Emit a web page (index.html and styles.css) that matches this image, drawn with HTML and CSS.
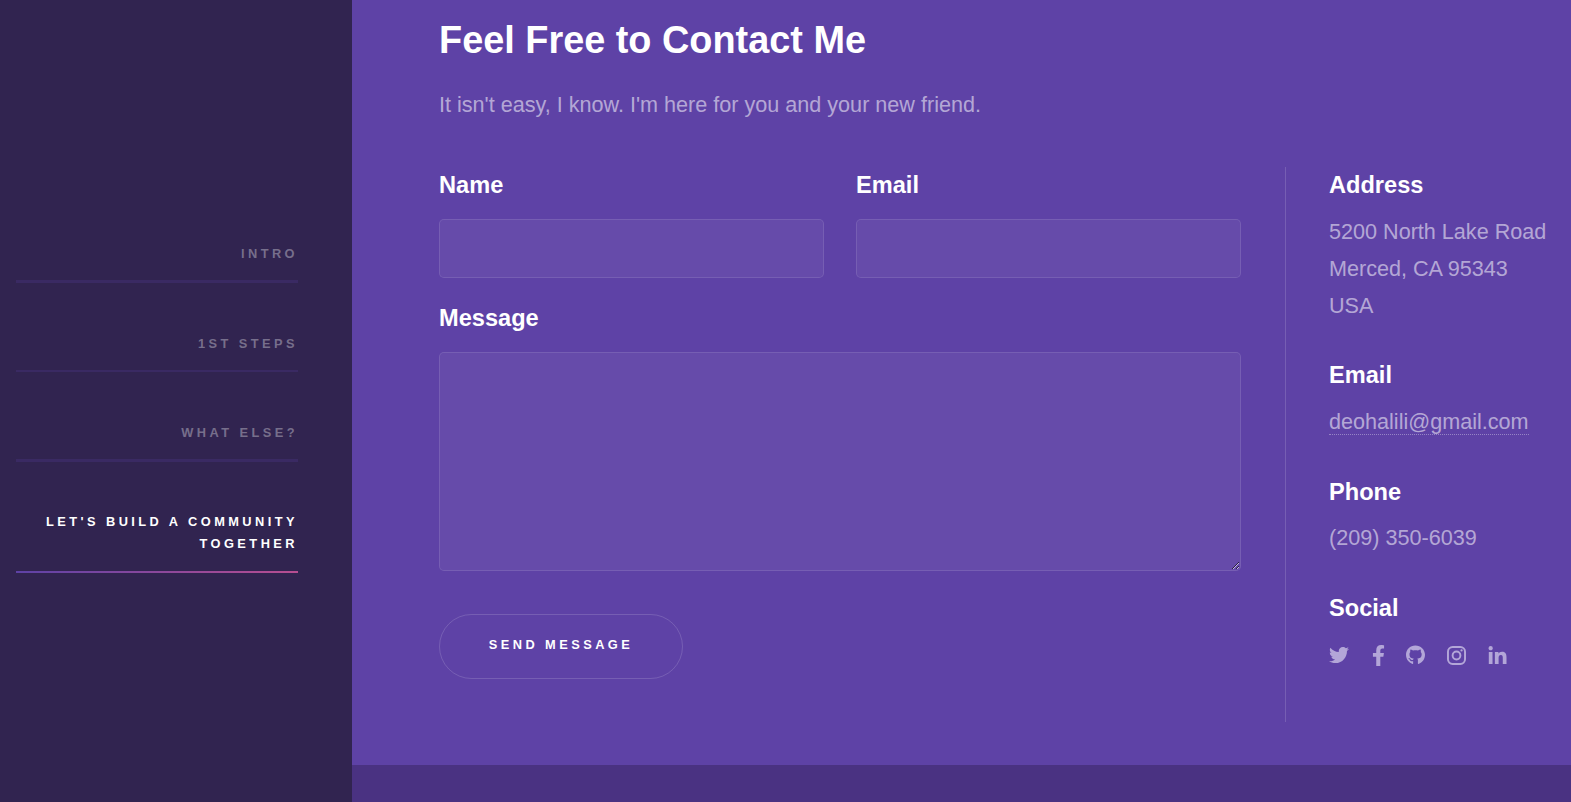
FILE: index.html
```html
<!DOCTYPE html>
<html lang="en">
<head>
<meta charset="utf-8">
<title>Contact</title>
<link rel="stylesheet" href="styles.css">
</head>
<body>
<div class="layout">
  <nav class="sidebar">
    <a class="nav-item thick" href="#intro">Intro</a>
    <a class="nav-item" href="#steps">1st Steps</a>
    <a class="nav-item thick" href="#else">What Else?</a>
    <a class="nav-item active" href="#contact">Let's Build a Community Together</a>
  </nav>
  <div class="main">
    <section class="contact">
      <h2 class="title">Feel Free to Contact Me</h2>
      <p class="lead">It isn't easy, I know. I'm here for you and your new friend.</p>
      <div class="split">
        <form class="form">
          <div class="field">
            <label class="label" for="name">Name</label>
            <input class="control" id="name" type="text">
          </div>
          <div class="field">
            <label class="label" for="email">Email</label>
            <input class="control" id="email" type="text">
          </div>
          <div class="field wide">
            <label class="label" for="message">Message</label>
            <textarea class="control area" id="message"></textarea>
          </div>
          <div class="wide actions">
            <button class="send" type="button">Send Message</button>
          </div>
        </form>
        <aside class="info">
          <h3 class="label">Address</h3>
          <p class="info-text">5200 North Lake Road<br>Merced, CA 95343<br>USA</p>
          <h3 class="label">Email</h3>
          <p class="info-text"><a class="mail" href="#mail">deohalili@gmail.com</a></p>
          <h3 class="label">Phone</h3>
          <p class="info-text">(209) 350-6039</p>
          <h3 class="label">Social</h3>
          <div class="social">
            <svg class="icon i-tw" viewBox="0 0 512 512" aria-label="Twitter"><path d="M459.37 151.716c.325 4.548.325 9.097.325 13.645 0 138.72-105.583 298.558-298.558 298.558-59.452 0-114.68-17.219-161.137-47.106 8.447.974 16.568 1.299 25.34 1.299 49.055 0 94.213-16.568 130.274-44.832-46.132-.975-84.792-31.188-98.112-72.772 6.498.974 12.995 1.624 19.818 1.624 9.421 0 18.843-1.3 27.614-3.573-48.081-9.747-84.143-51.98-84.143-102.985v-1.299c13.969 7.797 30.214 12.67 47.431 13.319-28.264-18.843-46.781-51.005-46.781-87.391 0-19.492 5.197-37.36 14.294-52.954 51.655 63.675 129.3 105.258 216.365 109.807-1.624-7.797-2.599-15.918-2.599-24.04 0-57.828 46.782-104.934 104.934-104.934 30.213 0 57.502 12.67 76.67 33.137 23.715-4.548 46.456-13.32 66.599-25.34-7.798 24.366-24.366 44.833-46.132 57.827 21.117-2.273 41.584-8.122 60.426-16.243-14.292 20.791-32.161 39.308-52.628 54.253z"/></svg>
            <svg class="icon i-fb" viewBox="0 0 320 512" aria-label="Facebook"><path d="M279.14 288l14.22-92.66h-88.91v-60.13c0-25.35 12.42-50.06 52.24-50.06h40.42V6.26S260.43 0 225.36 0c-73.22 0-121.08 44.38-121.08 124.72v70.62H22.89V288h81.39v224h100.17V288z"/></svg>
            <svg class="icon i-gh" viewBox="0 0 496 512" aria-label="GitHub"><path d="M244.8 8C106.1 8 0 113.3 0 252c0 110.9 69.8 205.8 169.5 239.2 12.8 2.3 17.3-5.6 17.3-12.1 0-6.2-.3-40.4-.3-61.4 0 0-70 15-84.7-29.8 0 0-11.4-29.1-27.8-36.6 0 0-22.9-15.7 1.6-15.4 0 0 24.9 2 38.6 25.8 21.9 38.6 58.6 27.5 72.9 20.9 2.3-16 8.8-27.1 16-33.7-55.9-6.2-112.3-14.3-112.3-110.5 0-27.5 7.6-41.3 23.6-58.9-2.6-6.5-11.1-33.3 2.6-67.9 20.9-6.5 69 27 69 27 20-5.6 41.5-8.5 62.8-8.5s42.8 2.9 62.8 8.5c0 0 48.1-33.6 69-27 13.7 34.7 5.2 61.4 2.6 67.9 16 17.7 25.8 31.5 25.8 58.9 0 96.5-58.9 104.2-114.8 110.5 9.2 7.9 17 22.9 17 46.4 0 33.7-.3 75.4-.3 83.6 0 6.5 4.6 14.4 17.3 12.1C428.2 457.8 496 362.9 496 252 496 113.3 383.5 8 244.8 8z"/></svg>
            <svg class="icon i-ig" viewBox="0 0 448 448" aria-label="Instagram"><rect class="ig-line" x="23" y="23" width="402" height="402" rx="110"/><circle class="ig-line" cx="224" cy="224" r="92"/><circle cx="343" cy="105" r="27"/></svg>
            <svg class="icon i-li" viewBox="0 0 448 448" aria-label="LinkedIn"><path d="M100.28 448H7.4V148.9h92.88zM53.79 108.1C24.09 108.1 0 83.5 0 53.8a53.79 53.79 0 0 1 107.58 0c0 29.7-24.1 54.3-53.79 54.3zM447.9 448h-92.68V302.4c0-34.7-.7-79.2-48.29-79.2-48.29 0-55.69 37.7-55.69 76.7V448h-92.78V148.9h89.08v40.8h1.3c12.4-23.5 42.69-48.3 87.88-48.3 94 0 111.28 61.9 111.28 142.3V448z"/></svg>
          </div>
        </aside>
      </div>
    </section>
    <footer class="footer"></footer>
  </div>
</div>
</body>
</html>
```
FILE: styles.css
```css
* { box-sizing: border-box; }
html, body { margin: 0; height: 100%; overflow: hidden; }
body {
  background: #312450;
  color: rgba(255, 255, 255, 0.55);
  font-family: "Liberation Sans", Arial, sans-serif;
  font-size: 21.6px;
  line-height: 37.33px;
}
.layout { display: flex; height: 802px; }

.sidebar {
  flex: 0 0 352px;
  background: #312450;
  padding: 193px 54px 0 16px;
  display: flex;
  flex-direction: column;
}
.nav-item {
  display: block;
  padding: 50px 0 15px;
  border-bottom: 2px solid #3a2a63;
  color: rgba(255, 255, 255, 0.35);
  font-size: 12.8px;
  font-weight: 700;
  line-height: 22px;
  letter-spacing: 3.45px;
  text-align: right;
  text-transform: uppercase;
  text-decoration: none;
}
.nav-item.thick { border-bottom-width: 3px; }
.nav-item.active {
  color: #fff;
  border-bottom: 0;
  padding: 49px 0 18px;
  background: linear-gradient(to right, #5e42a6, #b74e91) left bottom / 100% 2px no-repeat;
}

.main { flex: 1; display: flex; flex-direction: column; min-width: 0; }
.contact {
  flex: 1;
  background: #5e42a6;
  padding: 12px 0 0 87px;
}
.title {
  margin: 0;
  color: #fff;
  font-size: 37.87px;
  line-height: 56px;
  font-weight: 700;
}
.lead { margin: 18px 0 0; }
.split { display: flex; margin-top: 44px; height: 555px; }
.form {
  flex: 0 0 802px;
  display: grid;
  grid-template-columns: 385px 385px;
  column-gap: 32px;
  align-content: start;
}
.wide { grid-column: 1 / -1; }
.label {
  display: block;
  margin: 0;
  color: #fff;
  font-size: 23.6px;
  font-weight: 700;
  line-height: 37.33px;
}
.field .label { margin-bottom: 14px; }
.field.wide .label { margin-bottom: 15px; }
.field { margin-bottom: 22px; }
.field.wide { margin-bottom: 21px; }
.control {
  display: block;
  width: 100%;
  height: 59px;
  background: rgba(255, 255, 255, 0.05);
  background-clip: padding-box;
  border: 1px solid rgba(255, 255, 255, 0.15);
  border-radius: 5px;
  color: #fff;
  font: inherit;
  outline: 0;
}
.area { height: 219px; }
.actions { margin-top: 22px; }
.send {
  display: block;
  width: 244px;
  height: 65px;
  padding: 0 0 3px;
  background: transparent;
  border: 1px solid rgba(255, 255, 255, 0.15);
  border-radius: 33px;
  color: #fff;
  font-family: inherit;
  font-size: 12.8px;
  font-weight: 700;
  letter-spacing: 3.45px;
  text-transform: uppercase;
}

.info {
  margin-left: 44px;
  padding-left: 43px;
  border-left: 1px solid rgba(255, 255, 255, 0.15);
  white-space: nowrap;
}
.info-text { margin: 8.5px 0 33.3px; line-height: 37px; }
.mail {
  color: inherit;
  text-decoration: none;
  border-bottom: 1px dotted rgba(255, 255, 255, 0.35);
}
.social { display: flex; align-items: center; height: 24px; margin-top: 16px; }
.icon { display: block; height: 21px; fill: #b3a6d8; }
.i-tw { width: 20px; height: 20px; }
.i-fb { width: 13px; margin-left: 23px; }
.i-gh { width: 19px; height: 20px; margin-left: 21px; }
.i-ig { width: 19px; height: 19px; margin-left: 22px; }
.i-li { width: 19px; height: 18px; margin-left: 22px; }
.ig-line { fill: none; stroke: #b3a6d8; stroke-width: 46; }

.footer { flex: 0 0 37px; background: #4a3282; }
```
